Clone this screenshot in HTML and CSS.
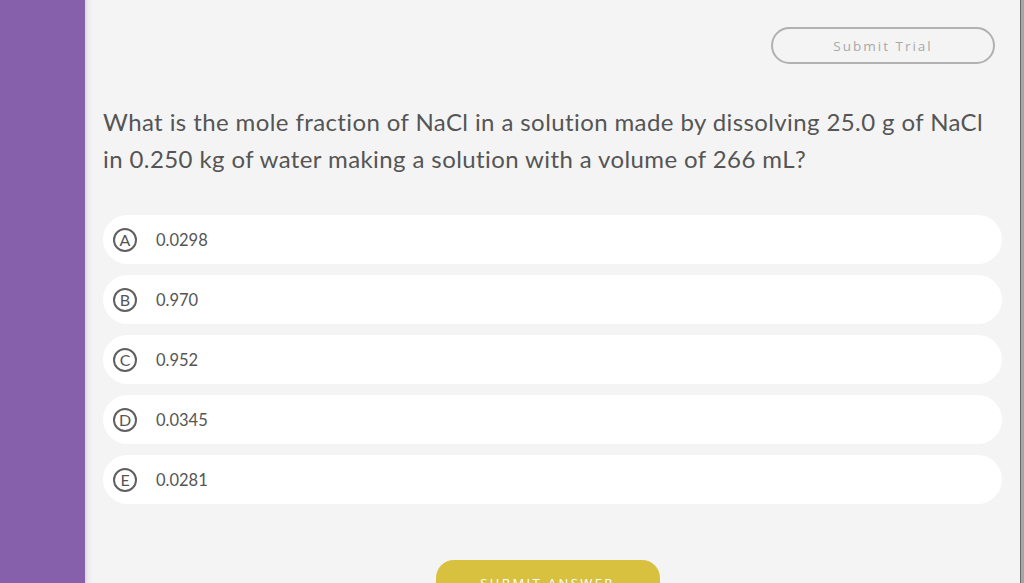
FILE: index.html
```html
<!DOCTYPE html>
<html>
<head>
<meta charset="utf-8">
<link rel="stylesheet" href="styles.css">
</head>
<body>
<div class="app">
  <aside class="sidebar"></aside>
  <main class="main">
    <div class="topbar">
      <button class="trial-btn">Submit Trial</button>
    </div>
    <p class="question">What is the mole fraction of NaCl in a solution made by dissolving 25.0 g of NaCl in 0.250 kg of water making a solution with a volume of 266 mL?</p>
    <ul class="options">
      <li class="option"><span class="letter">A</span><span class="value">0.0298</span></li>
      <li class="option"><span class="letter">B</span><span class="value">0.970</span></li>
      <li class="option"><span class="letter">C</span><span class="value">0.952</span></li>
      <li class="option"><span class="letter">D</span><span class="value">0.0345</span></li>
      <li class="option"><span class="letter">E</span><span class="value">0.0281</span></li>
    </ul>
    <div class="actions">
      <button class="submit-btn">SUBMIT ANSWER</button>
    </div>
  </main>
  <div class="edge"></div>
</div>
</body>
</html>
```
FILE: styles.css
```css
html, body {
  margin: 0;
  padding: 0;
  height: 100%;
  overflow: hidden;
}
body {
  font-family: Lato, "Open Sans", sans-serif;
  background: #f4f4f4;
}
.app {
  display: flex;
  height: 583px;
}
.sidebar {
  width: 85px;
  flex: none;
  background: #8660ab;
}
.main {
  flex: 1;
  background: linear-gradient(to right, #d8d8d8 0, #ececec 3px, #f4f4f4 8px, #f4f4f4 100%);
  padding: 0 18px 0 18px;
  display: flex;
  flex-direction: column;
}
.edge {
  width: 3px;
  flex: none;
  background: #a6a6a6;
  border-left: 1px solid #6a6a6a;
}
.topbar {
  display: flex;
  justify-content: flex-end;
  padding-top: 27px;
  padding-right: 7px;
}
.trial-btn {
  width: 224px;
  height: 37px;
  border: 2px solid #b1b1b1;
  border-radius: 19px;
  background: transparent;
  color: #a9a9a9;
  font-family: "Open Sans", sans-serif;
  font-size: 13.5px;
  letter-spacing: 2px;
  padding: 0;
}
.question {
  margin: 39px 0 0 0;
  font-family: Lato, sans-serif;
  font-size: 24px;
  line-height: 37px;
  letter-spacing: 0.4px;
  color: #555;
  padding-right: 10px;
}
.options {
  list-style: none;
  margin: 38px 0 0 0;
  padding: 0;
  display: flex;
  flex-direction: column;
  gap: 11px;
}
.option {
  height: 49px;
  background: #fff;
  border-radius: 25px;
  display: flex;
  align-items: center;
  padding-left: 10px;
  gap: 19px;
}
.letter {
  flex: none;
  box-sizing: border-box;
  width: 24px;
  height: 24px;
  border: 2px solid #606060;
  border-radius: 50%;
  display: flex;
  align-items: center;
  justify-content: center;
  font-family: Lato, sans-serif;
  font-size: 16px;
  color: #555;
}
.value {
  font-family: Lato, sans-serif;
  font-size: 16.5px;
  color: #555;
}
.actions {
  display: flex;
  justify-content: center;
  margin-top: 56px;
  padding-right: 10px;
}
.submit-btn {
  width: 224px;
  height: 40px;
  border: none;
  border-radius: 18px;
  background: #d8c13f;
  color: #fff;
  font-family: "Open Sans", sans-serif;
  font-size: 13px;
  letter-spacing: 2.4px;
  padding: 14px 0 0 0;
  display: flex;
  justify-content: center;
  align-items: flex-start;
}
```
